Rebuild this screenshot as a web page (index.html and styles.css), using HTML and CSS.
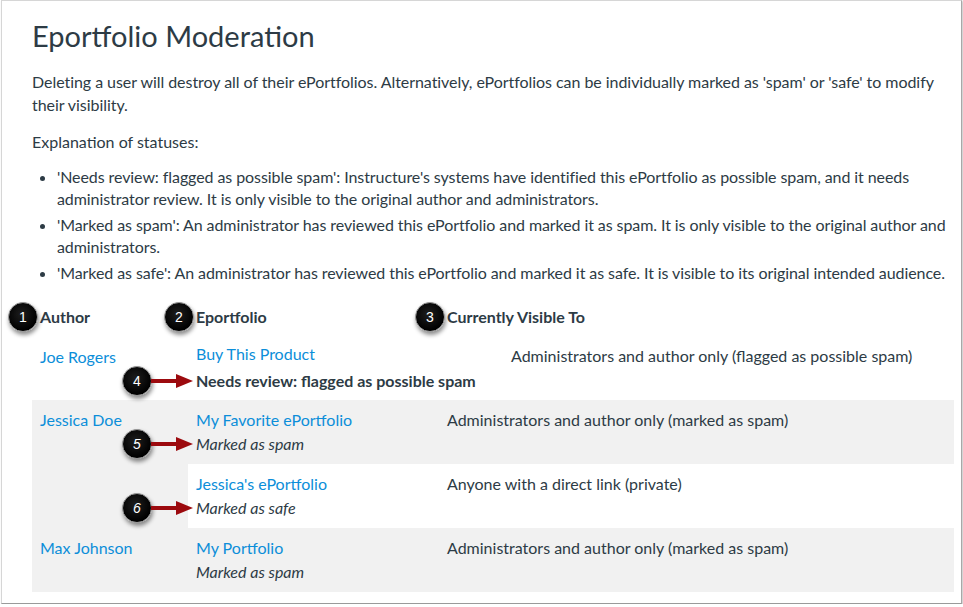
FILE: index.html
```html
<!DOCTYPE html>
<html lang="en">
<head>
<meta charset="utf-8">
<title>Eportfolio Moderation</title>
<link rel="stylesheet" href="styles.css">
</head>
<body>
<div class="frame">
  <h1 class="title">Eportfolio Moderation</h1>
  <p class="intro">Deleting a user will destroy all of their ePortfolios. Alternatively, ePortfolios can be individually marked as 'spam' or 'safe' to modify their visibility.</p>
  <p class="expl">Explanation of statuses:</p>
  <ul class="statuses">
    <li>'Needs review: flagged as possible spam': Instructure's systems have identified this ePortfolio as possible spam, and it needs administrator review. It is only visible to the original author and administrators.</li>
    <li>'Marked as spam': An administrator has reviewed this ePortfolio and marked it as spam. It is only visible to the original author and administrators.</li>
    <li>'Marked as safe': An administrator has reviewed this ePortfolio and marked it as safe. It is visible to its original intended audience.</li>
  </ul>

  <table class="mod">
    <colgroup><col class="c1"><col class="c2"><col class="c3"></colgroup>
    <thead>
      <tr>
        <th><span class="anchor"><span class="badge hbadge">1</span>Author</span></th>
        <th><span class="anchor"><span class="badge hbadge">2</span>Eportfolio</span></th>
        <th><span class="anchor"><span class="badge hbadge">3</span>Currently Visible To</span></th>
      </tr>
    </thead>
    <tbody>
      <tr class="first">
        <td class="author"><a href="#">Joe Rogers</a></td>
        <td class="epf">
          <a href="#">Buy This Product</a>
          <div class="status review"><span class="anchor"><span class="callout"><span class="badge">4</span><svg class="arrow" width="42" height="16" viewBox="0 0 42 16"><line x1="0" y1="8" x2="28" y2="8" stroke="#9c0a0e" stroke-width="4"/><polygon points="25,1 42,8 25,15" fill="#9c0a0e"/></svg></span>Needs review: flagged as possible spam</span></div>
        </td>
        <td class="vis">Administrators and author only (flagged as possible spam)</td>
      </tr>
      <tr class="gray">
        <td class="author" rowspan="2"><a href="#">Jessica Doe</a></td>
        <td class="epf">
          <a href="#">My Favorite ePortfolio</a>
          <div class="status"><span class="anchor"><span class="callout"><span class="badge">5</span><svg class="arrow" width="42" height="16" viewBox="0 0 42 16"><line x1="0" y1="8" x2="28" y2="8" stroke="#9c0a0e" stroke-width="4"/><polygon points="25,1 42,8 25,15" fill="#9c0a0e"/></svg></span>Marked as spam</span></div>
        </td>
        <td class="vis">Administrators and author only (marked as spam)</td>
      </tr>
      <tr class="white">
        <td class="epf">
          <a href="#">Jessica's ePortfolio</a>
          <div class="status"><span class="anchor"><span class="callout"><span class="badge">6</span><svg class="arrow" width="42" height="16" viewBox="0 0 42 16"><line x1="0" y1="8" x2="28" y2="8" stroke="#9c0a0e" stroke-width="4"/><polygon points="25,1 42,8 25,15" fill="#9c0a0e"/></svg></span>Marked as safe</span></div>
        </td>
        <td class="vis">Anyone with a direct link (private)</td>
      </tr>
      <tr class="gray">
        <td class="author"><a href="#">Max Johnson</a></td>
        <td class="epf">
          <a href="#">My Portfolio</a>
          <div class="status">Marked as spam</div>
        </td>
        <td class="vis">Administrators and author only (marked as spam)</td>
      </tr>
    </tbody>
  </table>
</div>
</body>
</html>
```

FILE: styles.css
```css
* { box-sizing: border-box; }

html, body {
  margin: 0;
  padding: 0;
  background: #ffffff;
}

body {
  padding-left: 1px;
  font-family: Lato, "Open Sans", "Liberation Sans", sans-serif;
  color: #2d3b45;
}

.frame {
  width: 961px;
  height: 604px;
  border: 1px solid #d6d6d6;
  border-right-color: #a8a8a8;
  border-bottom-color: #9a9a9a;
  box-shadow: 1px 1px 2px rgba(0, 0, 0, 0.25);
  padding: 17px 7px 0 30px;
  overflow: hidden;
  background: #fff;
}

.title {
  margin: 0;
  font-size: 29px;
  font-weight: 400;
  line-height: 36px;
  color: #2d3b45;
}

.intro {
  margin: 16px 0 0;
  font-size: 16px;
  line-height: 23px;
  letter-spacing: -0.05px;
}

.expl {
  margin: 14px 0 0;
  font-size: 16px;
  line-height: 23px;
}

.statuses {
  margin: 13px -5px 0 0;
  padding-left: 25px;
  font-size: 16px;
  line-height: 22px;
  letter-spacing: -0.08px;
}

.statuses li {
  margin-bottom: 4px;
}

.mod {
  margin-top: 14px;
  width: 922px;
  table-layout: fixed;
  border-collapse: collapse;
  font-size: 16px;
  line-height: 24px;
}

.c1 { width: 156px; }
.c2 { width: 251px; }
.c3 { width: 515px; }

.mod th {
  text-align: left;
  font-weight: 700;
  padding: 7px 8px 7px 8px;
  height: 38px;
  vertical-align: middle;
}

.mod td {
  vertical-align: top;
  padding: 8px 8px 8px 8px;
}

.mod a {
  color: #0c8ed9;
  text-decoration: none;
}

.anchor {
  position: relative;
}

.badge {
  display: inline-flex;
  align-items: center;
  justify-content: center;
  width: 30px;
  height: 30px;
  border-radius: 50%;
  background: radial-gradient(circle at 45% 40%, #1e1e1e, #000 70%);
  border: 1px solid #9a9a9a;
  box-shadow: 1px 3px 4px rgba(0, 0, 0, 0.45);
  color: #fff;
  font-family: "Liberation Sans", Arial, sans-serif;
  font-size: 14px;
  font-weight: 400;
  line-height: 1;
}

.hbadge {
  position: absolute;
  right: calc(100% + 2px);
  top: 50%;
  margin-top: -15px;
}

.callout {
  position: absolute;
  right: calc(100% + 3px);
  top: 50%;
  margin-top: -15px;
  display: flex;
  align-items: center;
  height: 30px;
}

.arrow {
  display: block;
  margin-left: -1px;
}

.first .author { padding-top: 9px; }
.first .epf { padding-top: 6px; padding-bottom: 7px; }
.first .vis { padding-top: 8px; padding-left: 72px; }
.first .status { margin-top: 3px; }

.status {
  font-style: italic;
  white-space: nowrap;
}

.status.review {
  font-style: normal;
  font-weight: 700;
}

.gray td { background: #f1f1f1; }
.white td { background: #ffffff; }
.gray td.author { background: #f1f1f1; }
```
